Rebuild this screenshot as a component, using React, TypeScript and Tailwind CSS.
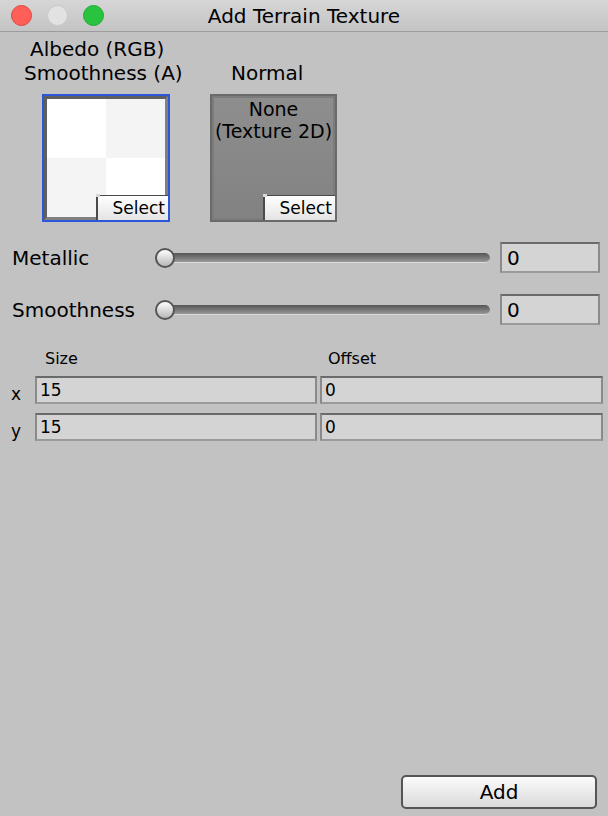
import React from 'react';

function Light({ color, ring }: { color: string; ring: string }) {
    return <div className={`w-[21px] h-[21px] rounded-full border ${color} ${ring}`} />;
}

function SelectButton() {
    return (
        <div className="absolute right-0 bottom-0 w-[72px] h-[25px] bg-gradient-to-b from-[#ffffff] to-[#e4e4e4] border-l-2 border-t border-[#4a4a4a] flex items-center justify-end pr-[3px] text-[17px] leading-none">
            <div className="absolute -top-[2px] -left-[2px] w-[4px] h-[3px] bg-[#d8d8d8]" />
            Select
        </div>
    );
}

function Slider({ label }: { label: string }) {
    return (
        <div className="flex items-center h-[31px]">
            <div className="w-[155px] pl-[12px] text-[20px] leading-none">{label}</div>
            <div className="relative flex-1 h-[22px] flex items-center">
                <div className="ml-[5px] flex-1 h-[10px] rounded-full bg-gradient-to-b from-[#555555] to-[#999999] border-b border-[#dcdcdc]" />
                <div className="absolute left-0 top-[1px] w-[20px] h-[20px] rounded-full border-2 border-[#555] bg-gradient-to-b from-[#ffffff] to-[#b8b8b8]" />
            </div>
            <div className="ml-[10px] mr-[8px] w-[100px] h-[31px] bg-[#d4d4d4] border-t-2 border-x-2 border-b-2 border-t-[#6a6a6a] border-x-[#8a8a8a] border-b-[#9a9a9a] flex items-center pl-[5px] text-[20px] leading-none">
                0
            </div>
        </div>
    );
}

function SmallField({ value, className }: { value: string; className: string }) {
    return (
        <div className={`h-[28px] bg-[#d4d4d4] border-t-2 border-x-2 border-b-2 border-t-[#6a6a6a] border-x-[#8a8a8a] border-b-[#9a9a9a] flex items-center pl-[3px] text-[17px] leading-none ${className}`}>
            {value}
        </div>
    );
}

export default function App() {
    return (
        <div className="w-[608px] h-[816px] bg-[#c2c2c2] flex flex-col text-black font-['DejaVu_Sans',sans-serif] overflow-hidden">
            {/* Title bar */}
            <div className="h-[32px] shrink-0 grid grid-cols-[1fr_auto_1fr] items-center bg-gradient-to-b from-[#d6d6d6] to-[#c4c4c4] border-b border-[#9c9c9c]">
                <div className="flex items-center gap-[15px] pl-[11px]">
                    <Light color="bg-[#fe5f58]" ring="border-[#e0443e]" />
                    <Light color="bg-[#e2e2e2]" ring="border-[#c8c8c8]" />
                    <Light color="bg-[#29c33f]" ring="border-[#1dad2b]" />
                </div>
                <div className="text-[20px] leading-none pt-[1px]">Add Terrain Texture</div>
                <div />
            </div>

            {/* Texture slots */}
            <div className="flex flex-col pt-[5px]">
                <div className="pl-[30px] text-[20px] leading-[24px]">Albedo (RGB)</div>
                <div className="flex text-[20px] leading-[24px]">
                    <div className="w-[231px] pl-[24px]">Smoothness (A)</div>
                    <div>Normal</div>
                </div>
                <div className="flex pl-[42px] gap-[40px] mt-[9px]">
                    <div className="relative w-[128px] h-[128px] border-2 border-[#2d57d9]">
                        <div className="w-full h-full border-[3px] border-t-[#5e5e5e] border-l-[#5e5e5e] border-r-[#808080] border-b-[#808080] grid grid-cols-2 grid-rows-2">
                            <div className="bg-white" />
                            <div className="bg-[#f4f4f4]" />
                            <div className="bg-[#f4f4f4]" />
                            <div className="bg-white" />
                        </div>
                        <SelectButton />
                    </div>
                    <div className="relative w-[127px] h-[128px] border-2 border-[#6a6a6a]">
                        <div className="w-full h-full border-[2px] border-[#7c7c7c] bg-gradient-to-b from-[#8e8e8e] to-[#828282] flex flex-col items-center pt-[0px] text-[19px] leading-[22px]">
                            <div>None</div>
                            <div>(Texture 2D)</div>
                        </div>
                        <SelectButton />
                    </div>
                </div>
            </div>

            {/* Sliders */}
            <div className="flex flex-col gap-[21px] mt-[20px]">
                <Slider label="Metallic" />
                <Slider label="Smoothness" />
            </div>

            {/* Tiling */}
            <div className="flex mt-[24px] text-[16px] leading-[20px]">
                <div className="w-[283px] pl-[45px]">Size</div>
                <div className="pl-[45px]">Offset</div>
            </div>
            <div className="flex flex-col gap-[9px] mt-[7px]">
                <div className="flex items-center">
                    <div className="w-[35px] pl-[11px] pt-[8px] text-[17px] leading-none">x</div>
                    <SmallField value="15" className="w-[282px]" />
                    <SmallField value="0" className="ml-[3px] w-[283px]" />
                </div>
                <div className="flex items-center">
                    <div className="w-[35px] pl-[11px] pt-[8px] text-[17px] leading-none">y</div>
                    <SmallField value="15" className="w-[282px]" />
                    <SmallField value="0" className="ml-[3px] w-[283px]" />
                </div>
            </div>

            <div className="flex-1" />

            {/* Footer */}
            <div className="flex justify-end pr-[11px] pb-[7px]">
                <button className="w-[196px] h-[34px] rounded-[5px] border-2 border-[#555] bg-gradient-to-b from-[#fbfbfb] to-[#dadada] text-[20px] leading-none">
                    Add
                </button>
            </div>
        </div>
    );
}
